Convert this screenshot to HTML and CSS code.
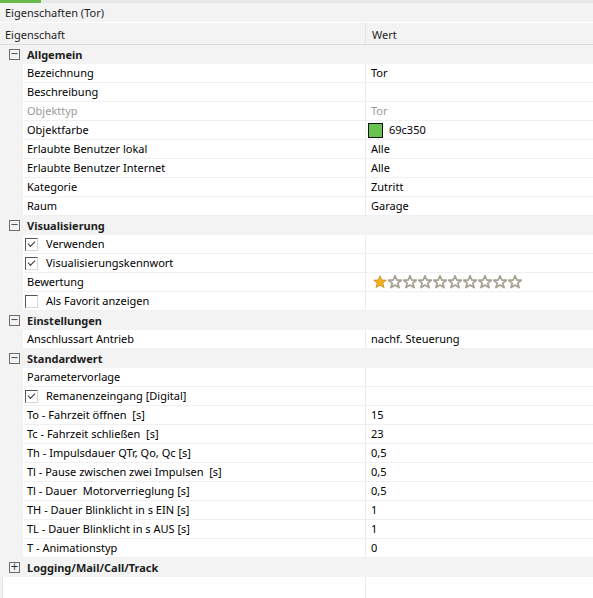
FILE: index.html
```html
<!DOCTYPE html>
<html lang="de">
<head>
<meta charset="utf-8">
<title>Eigenschaften (Tor)</title>
<link rel="stylesheet" href="styles.css">
</head>
<body>
<div class="panel">
  <div class="topstrip"><div class="accent"></div></div>
  <div class="titlebar">Eigenschaften (Tor)</div>
  <div class="colhead">
    <div class="ch-name">Eigenschaft</div>
    <div class="ch-val">Wert</div>
  </div>

  <div class="group"><span class="exp">−</span><span class="gname">Allgemein</span></div>
  <div class="row"><div class="m"></div><div class="n">Bezeichnung</div><div class="v">Tor</div></div>
  <div class="row"><div class="m"></div><div class="n">Beschreibung</div><div class="v"></div></div>
  <div class="row dim"><div class="m"></div><div class="n">Objekttyp</div><div class="v">Tor</div></div>
  <div class="row"><div class="m"></div><div class="n">Objektfarbe</div><div class="v"><span class="swatch"></span>69c350</div></div>
  <div class="row"><div class="m"></div><div class="n">Erlaubte Benutzer lokal</div><div class="v">Alle</div></div>
  <div class="row"><div class="m"></div><div class="n">Erlaubte Benutzer Internet</div><div class="v">Alle</div></div>
  <div class="row"><div class="m"></div><div class="n">Kategorie</div><div class="v">Zutritt</div></div>
  <div class="row"><div class="m"></div><div class="n">Raum</div><div class="v">Garage</div></div>

  <div class="group"><span class="exp">−</span><span class="gname">Visualisierung</span></div>
  <div class="row"><div class="m"></div><div class="n"><span class="cb checked"></span>Verwenden</div><div class="v"></div></div>
  <div class="row"><div class="m"></div><div class="n"><span class="cb checked"></span>Visualisierungskennwort</div><div class="v"></div></div>
  <div class="row"><div class="m"></div><div class="n">Bewertung</div><div class="v stars">
    <svg class="star" viewBox="0 0 14 14"><path class="gold" d="M7 .8 8.8 5 13.3 5.2 9.8 8.1 11 12.6 7 10.1 3 12.6 4.2 8.1.7 5.2 5.2 5Z"/></svg>
    <svg class="star" viewBox="0 0 14 14"><path class="grey" d="M7 .8 8.8 5 13.3 5.2 9.8 8.1 11 12.6 7 10.1 3 12.6 4.2 8.1.7 5.2 5.2 5Z"/></svg>
    <svg class="star" viewBox="0 0 14 14"><path class="grey" d="M7 .8 8.8 5 13.3 5.2 9.8 8.1 11 12.6 7 10.1 3 12.6 4.2 8.1.7 5.2 5.2 5Z"/></svg>
    <svg class="star" viewBox="0 0 14 14"><path class="grey" d="M7 .8 8.8 5 13.3 5.2 9.8 8.1 11 12.6 7 10.1 3 12.6 4.2 8.1.7 5.2 5.2 5Z"/></svg>
    <svg class="star" viewBox="0 0 14 14"><path class="grey" d="M7 .8 8.8 5 13.3 5.2 9.8 8.1 11 12.6 7 10.1 3 12.6 4.2 8.1.7 5.2 5.2 5Z"/></svg>
    <svg class="star" viewBox="0 0 14 14"><path class="grey" d="M7 .8 8.8 5 13.3 5.2 9.8 8.1 11 12.6 7 10.1 3 12.6 4.2 8.1.7 5.2 5.2 5Z"/></svg>
    <svg class="star" viewBox="0 0 14 14"><path class="grey" d="M7 .8 8.8 5 13.3 5.2 9.8 8.1 11 12.6 7 10.1 3 12.6 4.2 8.1.7 5.2 5.2 5Z"/></svg>
    <svg class="star" viewBox="0 0 14 14"><path class="grey" d="M7 .8 8.8 5 13.3 5.2 9.8 8.1 11 12.6 7 10.1 3 12.6 4.2 8.1.7 5.2 5.2 5Z"/></svg>
    <svg class="star" viewBox="0 0 14 14"><path class="grey" d="M7 .8 8.8 5 13.3 5.2 9.8 8.1 11 12.6 7 10.1 3 12.6 4.2 8.1.7 5.2 5.2 5Z"/></svg>
    <svg class="star" viewBox="0 0 14 14"><path class="grey" d="M7 .8 8.8 5 13.3 5.2 9.8 8.1 11 12.6 7 10.1 3 12.6 4.2 8.1.7 5.2 5.2 5Z"/></svg>
  </div></div>
  <div class="row"><div class="m"></div><div class="n"><span class="cb"></span>Als Favorit anzeigen</div><div class="v"></div></div>

  <div class="group"><span class="exp">−</span><span class="gname">Einstellungen</span></div>
  <div class="row"><div class="m"></div><div class="n">Anschlussart Antrieb</div><div class="v">nachf. Steuerung</div></div>

  <div class="group"><span class="exp">−</span><span class="gname">Standardwert</span></div>
  <div class="row"><div class="m"></div><div class="n">Parametervorlage</div><div class="v"></div></div>
  <div class="row"><div class="m"></div><div class="n"><span class="cb checked"></span>Remanenzeingang [Digital]</div><div class="v"></div></div>
  <div class="row"><div class="m"></div><div class="n">To - Fahrzeit öffnen&nbsp; [s]</div><div class="v">15</div></div>
  <div class="row"><div class="m"></div><div class="n">Tc - Fahrzeit schließen&nbsp; [s]</div><div class="v">23</div></div>
  <div class="row"><div class="m"></div><div class="n">Th - Impulsdauer QTr, Qo, Qc [s]</div><div class="v">0,5</div></div>
  <div class="row"><div class="m"></div><div class="n">Tl - Pause zwischen zwei Impulsen&nbsp; [s]</div><div class="v">0,5</div></div>
  <div class="row"><div class="m"></div><div class="n">Tl - Dauer&nbsp; Motorverrieglung [s]</div><div class="v">0,5</div></div>
  <div class="row"><div class="m"></div><div class="n">TH - Dauer Blinklicht in s EIN [s]</div><div class="v">1</div></div>
  <div class="row"><div class="m"></div><div class="n">TL - Dauer Blinklicht in s AUS [s]</div><div class="v">1</div></div>
  <div class="row"><div class="m"></div><div class="n">T - Animationstyp</div><div class="v">0</div></div>

  <div class="group"><span class="exp">+</span><span class="gname">Logging/Mail/Call/Track</span></div>
  <div class="filler"><div class="fm"></div><div class="fn"></div><div class="fv"></div></div>
</div>
</body>
</html>
```
FILE: styles.css
```css
html, body {
  margin: 0;
  padding: 0;
  background: #ffffff;
}
body {
  font-family: "Noto Sans", "Open Sans", sans-serif;
  font-size: 11px;
  color: #000;
  width: 593px;
  height: 598px;
  overflow: hidden;
}
.panel {
  display: flex;
  flex-direction: column;
  width: 593px;
  height: 598px;
}
.topstrip {
  height: 3px;
  background: #e8e8e8;
  display: flex;
}
.accent {
  width: 41px;
  background: #67b94b;
}
.titlebar {
  height: 19px;
  line-height: 20px;
  padding-left: 5px;
  background: #f3f3f3;
  color: #1e1e1e;
  border-bottom: 1px solid #ffffff;
}
.colhead {
  height: 21px;
  display: grid;
  grid-template-columns: 366px 1fr;
  background: #f3f3f3;
  border-bottom: 1px solid #dadada;
  color: #1e1e1e;
}
.ch-name {
  padding-left: 5px;
  line-height: 23px;
  border-right: 1px solid #e2e2e2;
}
.ch-val {
  padding-left: 6px;
  line-height: 23px;
}
.group {
  height: 19px;
  display: flex;
  align-items: center;
  background: #f3f3f3;
  flex-shrink: 0;
}
.exp {
  width: 9px;
  height: 9px;
  border: 1px solid #6e6e6e;
  margin-left: 9px;
  margin-right: 7px;
  font-size: 10px;
  line-height: 8px;
  text-align: center;
  color: #333;
  font-family: "DejaVu Sans", sans-serif;
  box-sizing: content-box;
}
.gname {
  font-weight: bold;
  color: #1e1e1e;
}
.row {
  height: 19px;
  display: grid;
  grid-template-columns: 23px 343px 1fr;
  flex-shrink: 0;
}
.m {
  background: #f3f3f3;
}
.n {
  background: #fff;
  border-right: 1px solid #ececec;
  border-bottom: 1px solid #f0f0f0;
  padding-left: 4px;
  line-height: 18px;
  white-space: nowrap;
  display: flex;
  align-items: center;
}
.v {
  background: #fff;
  border-bottom: 1px solid #f0f0f0;
  padding-left: 5px;
  line-height: 18px;
  display: flex;
  align-items: center;
}
.dim .n, .dim .v {
  color: #9a9a9a;
}
.swatch {
  width: 13px;
  height: 13px;
  background: #69c350;
  border: 1px solid #111;
  margin-left: -3px;
  margin-right: 6px;
}
.cb {
  width: 11px;
  height: 11px;
  border-left: 1px solid #555;
  border-top: 1px solid #555;
  border-right: 1px solid #d8d8d8;
  border-bottom: 1px solid #d8d8d8;
  margin-left: -2px;
  margin-right: 8px;
  position: relative;
  flex-shrink: 0;
}
.cb.checked::after {
  content: "";
  position: absolute;
  left: 2px;
  top: 2px;
  width: 6px;
  height: 3px;
  border-left: 1px solid #333;
  border-bottom: 1px solid #333;
  transform: rotate(-45deg);
}
.stars {
  gap: 1px;
  padding-left: 7px;
}
.star {
  width: 14px;
  height: 14px;
}
.gold {
  fill: #f3b21b;
  stroke: #c98a10;
  stroke-width: .8;
}
.grey {
  fill: #ffffff;
  stroke: #a9a395;
  stroke-width: 1.8;
  stroke-linejoin: round;
}
.filler {
  flex: 1;
  display: grid;
  grid-template-columns: 3px 363px 1fr;
}
.fm {
  background: #f3f3f3;
  border-right: 1px solid #e4e4e4;
}
.fn {
  border-right: 1px solid #ececec;
}
```
